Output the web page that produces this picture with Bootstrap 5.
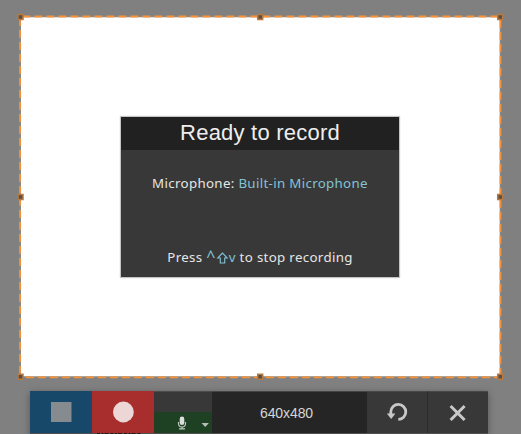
<!DOCTYPE html>
<html lang="en">
<head>
<meta charset="utf-8">
<title>Screen recorder</title>
<link href="https://cdn.jsdelivr.net/npm/bootstrap@5.3.0/dist/css/bootstrap.min.css" rel="stylesheet">
<style>
body{background:#808080;width:521px;height:434px;font-family:"Noto Sans","Open Sans",sans-serif}
.capture-area{width:479px;height:360px;margin:17px 0 0 21px;background:#fff}
.selection{left:-21px;top:-17px;pointer-events:none}
.ready-panel{width:278px;height:160px;background:#383838;box-shadow:0 0 1px 1px rgba(90,90,90,.35);color:#e6e6e6;margin-right:1px}
.ready-title{height:33px;background:#212121;font:22px/32px "Liberation Sans",Arial,sans-serif;letter-spacing:.22px;color:#eee}
.ready-line{font-size:13.3px;line-height:18px;letter-spacing:.33px;white-space:nowrap}
.mic-line{margin-top:24px}
.stop-line{margin-top:56px}
.caret-key{font-size:16px;line-height:1}
.accent{color:#83c3d6}
.toolbar{width:458px;height:43px;margin:14px 0 0 30px;box-shadow:0 2px 7px rgba(0,0,0,.35);background:#383838;border-bottom:1px solid #505050}
.tool{height:42px;border:0;padding:0;border-radius:0}
.tool-stop{width:62px;background:#174769}
.tool-record{width:62px;background:#a82e2e}
.tool-audio{width:58px}
.audio-level{height:21px;background:#383838;border-top:1px solid #4c4c4c}
.audio-source{height:21px;background:#1e4023}
.tool-size{width:155px;background:#252525;color:#d6d6d6;font:14px/42px "Liberation Sans",Arial,sans-serif;letter-spacing:-.1px;padding-right:6px;border-top:1px solid #454545}
.tool-plain{width:60px;background:#383838;border-top:1px solid #484848}
.tool-close{width:61px;border-left:1px solid #2c2c2c}
</style>
<script src="https://cdn.jsdelivr.net/npm/bootstrap@5.3.0/dist/js/bootstrap.bundle.min.js"></script>
</head>
<body class="m-0 overflow-hidden d-flex flex-column">
<main class="capture-area position-relative d-flex align-items-center justify-content-center flex-shrink-0">
  <section class="ready-panel text-center">
    <h1 class="ready-title m-0">Ready to record</h1>
    <p class="ready-line mic-line mb-0">Microphone: <span class="accent">Built-in Microphone</span></p>
    <p class="ready-line stop-line mb-0">Press <span class="accent"><span class="caret-key">^</span><svg width="13" height="12" viewBox="0 0 13 12" fill="none" stroke="currentColor" stroke-width="1.1"><path d="M6.5 1 1.8 6h2.5v5h4.4V6h2.5z"/></svg>v</span> to stop recording</p>
  </section>
  <svg class="selection position-absolute" width="521" height="400" fill="none">
    <path d="M20 16.5H500.5V377H20Z" stroke="#8c8780" stroke-width="1.6"/>
    <g stroke="#f79239" stroke-width="1.8" stroke-dasharray="7.8 4.2">
      <path d="M22.5 16.5H500"/><path d="M26 377.3H500"/><path d="M20 18V377"/><path d="M500.5 20V377"/>
    </g>
    <g fill="#55504b" stroke="#b9783e" stroke-width="1.5">
      <path d="M18 14.5h5v5h-5zM257.7 14.5h5v5h-5zM497.7 14.5h5v5h-5zM18 194.5h5v5h-5zM497.7 194.5h5v5h-5zM18 374.2h5v5h-5zM257.7 374.2h5v5h-5zM497.7 374.2h5v5h-5z"/>
    </g>
  </svg>
</main>
<nav class="toolbar d-flex flex-shrink-0">
  <button class="tool tool-stop" aria-label="Stop"><svg class="d-block" width="62" height="42"><path d="M21 11h20.5v20H21z" fill="#868b8f"/></svg></button>
  <button class="tool tool-record" aria-label="Record"><svg class="d-block overflow-visible" width="62" height="42"><circle cx="31.4" cy="21" r="10.4" fill="#edd6d6"/><path d="M5 42.5h44" stroke="#2a1515" stroke-dasharray="3 1.5 2 1 4 2"/></svg></button>
  <div class="tool-audio d-flex flex-column">
    <div class="audio-level"></div>
    <button class="audio-source border-0 p-0" aria-label="Microphone"><svg class="d-block" width="58" height="21"><rect x="25.7" y="4.6" width="4.6" height="8.4" rx="2.3" fill="#d9ded9"/><path d="M24.5 10v1.6a3.5 3.5 0 0 0 7 0V10M28 15V16.8M25 16.8h6" fill="none" stroke="#bcc8bd" stroke-width="1.2"/><path d="M47.5 11h7.4L51.2 15z" fill="#b5bdb6"/></svg></button>
  </div>
  <div class="tool tool-size text-center">640x480</div>
  <button class="tool tool-plain" aria-label="Reset"><svg class="d-block" width="60" height="41"><g transform="translate(0 .9)"><path d="M23.8 22.5v-3.7a7.5 7.5 0 1 1 7.5 7.7" fill="none" stroke="#c8c8c8" stroke-width="2.8"/><path d="M19.8 20.5h8.6L24.2 26z" fill="#c8c8c8"/></g></svg></button>
  <button class="tool tool-plain tool-close" aria-label="Close"><svg class="d-block" width="60" height="41"><path d="m22.6 14 14 14m0-14-14 14" fill="none" stroke="#c8c8c8" stroke-width="3"/></svg></button>
</nav>
</body>
</html>
